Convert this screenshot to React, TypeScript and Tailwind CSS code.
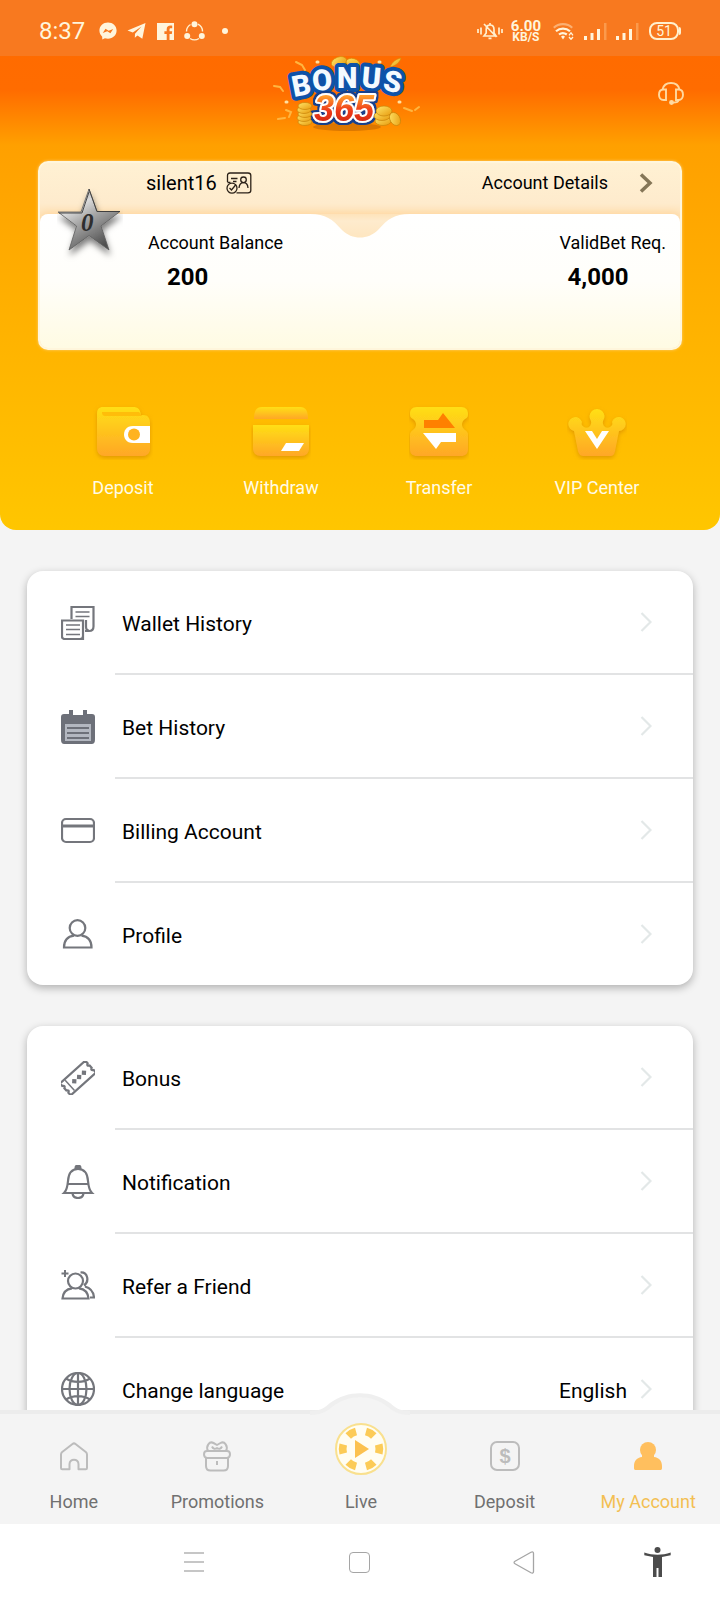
import type { ReactNode } from "react";

interface Item {
  label: string;
  icon: ReactNode;
  value?: string;
}

/* Status bar icons */

const MessengerIcon = () => (
  <svg className="w-[18px] h-[18px]" viewBox="0 0 18 18" fill="#fff5dc">
    <path
      fillRule="evenodd"
      d="M9 .5C4.2.5.4 3.9.4 8.6c0 2.5 1.1 4.6 2.8 6.1l.1 2.8 2.6-1.2c1 .3 2 .5 3.100.5 4.800 0 8.600-3.500 8.600-8.200S13.800.5 9 .5ZM3.800 10.900l2.700-4.100 3.200 1.900 4.500-1.800-2.800 4.300-3.100-2-4.500 1.700Z"
    />
  </svg>
);

const TelegramIcon = () => (
  <svg className="w-[19px] h-[18px]" viewBox="0 0 19 18" fill="#fff5dc">
    <path d="M18.500 1 .5 8.500l5.300 2 8.700-6-6.500 7.300-.2 4 2.700-2.400 4.800 3.400Z" />
  </svg>
);

const FacebookIcon = () => (
  <svg className="w-[17px] h-[17px]" viewBox="0 0 17 17" fill="#fff5dc">
    <path d="M0 0h17v17h-4.500v-6h2.300l.4-2.800h-2.700V6.500c0-.8.400-1.300 1.400-1.300h1.300V2.700c-3.600-.5-5.500.7-5.500 3.500v2H7.400V11h2.300v6H0Z" />
  </svg>
);

const ShareIcon = () => (
  <svg className="w-[21px] h-[20px]" viewBox="0 0 21 20" fill="none" stroke="#fff0cf" strokeWidth="1.400">
    <path d="M6.500 3.500a8 8 0 0 0-4 7M14 3.200a8 8 0 0 1 4.500 7.300M6 17.500a8.500 8.500 0 0 0 9 0" />
    <g fill="#fff5dc" stroke="none">
      <circle cx="10.500" cy="3.200" r="3" />
      <circle cx="3.200" cy="15" r="3" />
      <circle cx="17.800" cy="15" r="3" />
    </g>
  </svg>
);

const MuteIcon = () => (
  <svg className="w-[26px] h-[18px]" viewBox="0 0 26 18" fill="none" stroke="#fff0cf" strokeWidth="1.700">
    <path d="M1 7v4M4 5.500v7M22 5.500v7M25 7v4" />
    <path d="M7 14 9.200 11V7.500C9.200 4.500 11 3 13 3s4 1.500 4 4.500V11l2 3ZM13 1v2M11.500 16.300h3M7 2l12.500 13" />
  </svg>
);

const WifiIcon = () => (
  <svg className="w-[21px] h-[17px]" viewBox="0 0 21 17" fill="none" strokeWidth="2.200">
    <path d="M.8 4.800c5-4.800 13.500-4.800 18.400 0" stroke="#fbb072" />
    <path d="M3 8.300c4-3.700 10-3.700 14 0M6 11.500c2.500-2 5-2 7.800 0" stroke="#fff5dc" />
    <path d="m8 13.500 2-1 2 1-2 3Z" fill="#fff5dc" stroke="none" />
    <path d="m16 12.300 2-2.500 2 2.500M16 14l2 2.300L20 14" stroke="#fff5dc" strokeWidth="1.300" />
  </svg>
);

const SignalIcon = () => (
  <svg className="w-[23px] h-[17px]" viewBox="0 0 23 17" fill="#fff5dc">
    <path d="M0 13h3v4H0ZM6.500 10h3v7h-3ZM13 6h3v11h-3Z" />
    <path d="M20 0h2.500v17H20Z" fill="#fb9a4c" />
  </svg>
);

const HeadsetIcon = () => (
  <svg className="w-[26px] h-[23px]" viewBox="0 0 26 23" fill="none" stroke="#ffd9a0" strokeWidth="1.900">
    <path d="M4.500 7.500C5.500 3 9 1 13 1s7.500 2 8.500 6.500" />
    <path d="M8 7.500H5.500C2.500 7.500 1 10 1 12.800 1 15.500 2.500 18 5.500 18H8ZM18 7.500h2.500c3 0 4.500 2.500 4.500 5.300 0 2.700-1.500 5.200-4.500 5.200H18Z" />
    <path d="M20.500 18c0 1.800-2 2.600-5.500 2.600" />
    <circle cx="13.500" cy="20.500" r="1.500" fill="#ffd9a0" />
  </svg>
);

const Logo = () => (
  <svg className="w-[180px] h-[84px]" viewBox="10 6 180 84" role="img" aria-label="Bonus 365">
    <defs>
      <linearGradient id="logo-num" x1="0" y1="0" x2="0" y2="1">
        <stop offset="0.200" stopColor="#ff9c2e" />
        <stop offset="0.550" stopColor="#ee3a1a" />
        <stop offset="1" stopColor="#c3200f" />
      </linearGradient>
      <linearGradient id="logo-coin" x1="0" y1="0" x2="1" y2="1">
        <stop offset="0" stopColor="#ffe66a" />
        <stop offset="1" stopColor="#e89a0c" />
      </linearGradient>
      <filter id="logo-outline" x="-15%" y="-15%" width="130%" height="130%">
        <feMorphology in="SourceAlpha" operator="dilate" radius="2" result="grown" />
        <feFlood floodColor="#123f8e" />
        <feComposite in2="grown" operator="in" />
        <feMerge>
          <feMergeNode />
          <feMergeNode in="SourceGraphic" />
        </feMerge>
      </filter>
    </defs>
    <g fill="url(#logo-coin)" stroke="#d98a0a" strokeWidth="0.700">
      <ellipse cx="79" cy="12" rx="8" ry="5" transform="rotate(-20 79 12)" />
      <ellipse cx="93" cy="13" rx="7" ry="4.500" transform="rotate(15 93 13)" />
      <path d="M130 17c2-5 6-8 11-9-1 4-5 8-11 9Z" />
    </g>
    <g fill="none" stroke="#ffb640" strokeWidth="2" strokeLinecap="round">
      <path d="m36 12 6 3 3 5M14 36l6 1 3 4M18 69l7-1M26 60l5 2-2 5M144 58l8 3M155 60l4-3" />
      <path d="M57 12h1M119 12h1M26 52h1M139 52h1" strokeWidth="3" stroke="#ffe0a0" />
    </g>
    <ellipse cx="87" cy="77" rx="34" ry="4" fill="#9a4a00" opacity="0.350" />
    <text
      x="34 53 77 101 122"
      y="47 41 38 37 40"
      rotate="-11 -5 0 5 10"
      fontFamily="Roboto, sans-serif"
      fontWeight="900"
      fontSize="29"
      strokeLinejoin="round"
      paintOrder="stroke"
      fill="#f4faff"
      stroke="#0e52a8"
      strokeWidth="8"
    >
      BONUS
    </text>
    <text
      x="54"
      y="71"
      fontFamily="'Liberation Sans', sans-serif"
      fontWeight="700"
      fontStyle="italic"
      fontSize="36"
      strokeLinejoin="round"
      paintOrder="stroke"
      fill="url(#logo-num)"
      stroke="#fff"
      strokeWidth="4"
      filter="url(#logo-outline)"
    >
      365
    </text>
    <g fill="url(#logo-coin)" stroke="#c98409" strokeWidth="0.700">
      <ellipse cx="45" cy="72" rx="7" ry="3.500" />
      <ellipse cx="44" cy="68" rx="7" ry="3.500" />
      <ellipse cx="45" cy="64" rx="7" ry="3.500" />
      <ellipse cx="44" cy="60" rx="7" ry="3.500" />
      <ellipse cx="45" cy="56" rx="7" ry="3.500" />
      <ellipse cx="123" cy="71" rx="8" ry="4.500" />
      <ellipse cx="122" cy="66" rx="8" ry="4.500" />
      <ellipse cx="124" cy="61" rx="8" ry="5" />
      <ellipse cx="135" cy="69" rx="5" ry="7" transform="rotate(-30 135 69)" />
    </g>
  </svg>
);

/* Account card */

const IdCardIcon = () => (
  <svg className="w-[26px] h-[22px]" viewBox="0 0 26 22" fill="none" stroke="#2b2118" strokeWidth="1.300">
    <path d="M1.500 10V3.500C1.500 2 2.300 1 4 1h18c1.800 0 2.800 1 2.800 2.500v15c0 1.500-1 2.300-2.800 2.300H10.500" />
    <path d="M5 6.500h6.500M7 9.500h3.500M1.500 10.500h3" />
    <circle cx="17.500" cy="7.800" r="2.800" />
    <path d="M13 16c.3-3.500 2-5.300 4.500-5.300s4.300 1.800 4.500 5.300" />
    <circle cx="6" cy="16.200" r="5" />
    <path d="m3.500 16 2 2 4.500-5.500" />
  </svg>
);

const StarBadge = () => (
  <svg className="absolute left-[17px] top-[25px] w-[66px] h-[76px]" viewBox="0 0 66 76">
    <defs>
      <linearGradient id="star" x1="0" y1="0" x2="0.600" y2="1">
        <stop offset="0" stopColor="#6e6e6e" />
        <stop offset="0.350" stopColor="#dadada" />
        <stop offset="0.550" stopColor="#a9a9a9" />
        <stop offset="1" stopColor="#4f4f4f" />
      </linearGradient>
      <filter id="star-shadow" x="-20%" y="-20%" width="150%" height="150%">
        <feDropShadow dx="1" dy="5" stdDeviation="3" floodColor="#000" floodOpacity="0.500" />
      </filter>
    </defs>
    <path
      d="m32 1 8 22.500h23L44 38l8 24L32 47.500 12 62l7.500-24L1 24h23Z"
      fill="url(#star)"
      stroke="#5d5d5d"
      strokeWidth="0.800"
      filter="url(#star-shadow)"
    />
    <path d="m32 4-7 21H2M32 1l8 22.500h23" fill="none" stroke="#3a3a3a" strokeWidth="0.900" />
    <text
      x="24"
      y="43"
      fontFamily="'Liberation Serif', serif"
      fontStyle="italic"
      fontWeight="700"
      fontSize="25"
      fill="#2e2e2e"
    >
      0
    </text>
  </svg>
);

/* Quick actions */

const ActionDefs = () => (
  <svg className="absolute w-0 h-0" aria-hidden="true">
    <defs>
      <linearGradient id="gold" x1="0" y1="0" x2="0" y2="1">
        <stop offset="0" stopColor="#ffdf16" />
        <stop offset="1" stopColor="#ffa726" />
      </linearGradient>
      <filter id="gold-shadow" x="-20%" y="-20%" width="140%" height="150%">
        <feDropShadow dx="0" dy="2" stdDeviation="2" floodColor="#c47400" floodOpacity="0.500" />
      </filter>
    </defs>
  </svg>
);

const actions: Item[] = [
  {
    label: "Deposit",
    icon: (
      <>
        <path
          d="M9 1h30c5 0 7 2 8 8h2c5 0 7 3 7 8v26c0 4-3 7-7 7H11c-5 0-8-3-8-8V8c0-5 2-7 6-7Z"
          fill="url(#gold)"
          filter="url(#gold-shadow)"
        />
        <path d="M8 6h37l3 4H12c-3 0-4-1-4-4Z" fill="#ffbd0a" />
        <path d="M39 20h17v17H39c-7 0-9-5-9-8.500S32 20 39 20Z" fill="#fff" />
        <circle cx="40" cy="28.500" r="6" fill="#ffb320" />
      </>
    ),
  },
  {
    label: "Withdraw",
    icon: (
      <>
        <path d="M10 1h38c6 0 8 4 8 12H2C2 5 4 1 10 1Z" fill="url(#gold)" />
        <path
          d="M1 19h56v23c0 5-3 8-8 8H9c-5 0-8-3-8-8Z"
          fill="url(#gold)"
          filter="url(#gold-shadow)"
        />
        <path d="M34 37h18l-5 8H29Z" fill="#fff" />
      </>
    ),
  },
  {
    label: "Transfer",
    icon: (
      <>
        <path
          d="M7 1h44c5 0 7 3 7 7 0 3-1 4-3 5-4 3-4 8 0 11 2 1 3 3 3 5v14c0 5-3 7-7 7H7c-4 0-7-2-7-7V29c0-2 1-4 3-5 4-3 4-8 0-11-2-1-3-2-3-5 0-4 2-7 7-7Z"
          fill="url(#gold)"
          filter="url(#gold-shadow)"
        />
        <path d="M14 14h14l5-7 12 15H14Z" fill="#ff8000" />
        <path d="M13 27h33v9H31l-5 7L13 27Z" fill="#fff" />
      </>
    ),
  },
  {
    label: "VIP Center",
    icon: (
      <>
        <path
          d="M23 15a7.500 7.500 0 1 1 12 0c-1 5 3 8 7 6 2-1 3-3 2-5a7 7 0 1 1 7 9l-4 20c-1 4-2 5-5 5H16c-3 0-5-1-6-5L6 25a7 7 0 1 1 8-9c-1 2 0 4 2 5 4 2 8-1 7-6Z"
          fill="url(#gold)"
          filter="url(#gold-shadow)"
        />
        <path d="M17 25h7l5 8 5-8h7L29 43Z" fill="#fff" />
      </>
    ),
  },
];

/* Menu rows */

const historyMenu: Item[] = [
  {
    label: "Wallet History",
    icon: (
      <>
        <path d="M10.500 13V1h22v19.500c0 3-2 4.500-4.500 4.500h-4M28 24.500c-2 0-3-1.500-3-4V14" />
        <path d="M14.500 6h14M14.500 10.500h14" strokeWidth="1.500" />
        <path d="M1 14.500h21v18.500H3.500C2 33 1 32 1 30.500ZM22 30c0 2-1 3-3 3" />
        <path d="M5 19h14M5 23.500h14M5 28.500h14" strokeWidth="1.500" />
      </>
    ),
  },
  {
    label: "Bet History",
    icon: (
      <>
        <path
          d="M3 4h5V0h4v5h10V0h4v4h5c2 0 3 1 3 3v22c0 4-1 5-4 5H4c-3 0-4-1-4-5V7c0-2 1-3 3-3Z"
          fill="#6d7079"
          stroke="none"
        />
        <path d="M4 14h26v17H4Z" fill="#b3b7c0" stroke="none" />
        <path d="M6 18h22M6 23h22M6 28h22" stroke="#6d7079" strokeWidth="1.800" />
      </>
    ),
  },
  {
    label: "Billing Account",
    icon: (
      <>
        <rect x="1" y="5" width="32" height="23" rx="4" />
        <path d="M1 12h32" strokeWidth="3" />
      </>
    ),
  },
  {
    label: "Profile",
    icon: (
      <>
        <circle cx="16.500" cy="11" r="7.800" />
        <path d="M13 18.700C7 19.500 3 23.500 3 30.500h27.500c0-7-4-11-10-11.800" />
      </>
    ),
  },
];

const settingsMenu: Item[] = [
  {
    label: "Bonus",
    icon: (
      <g transform="rotate(-42 17 17)">
        <path d="M0 9h34v3.500c-2 1-2 2 0 3v3c-2 1-2 2 0 3V25H0v-3.500c2-1 2-2 0-3v-3c2-1 2-2 0-3Z" />
        <path d="M6 10v14" strokeWidth="1.500" />
        <path d="m12 14 3 3-3 3-3-3ZM18.500 14l3 3-3 3-3-3ZM25 14l3 3-3 3-3-3Z" fill="#74767c" stroke="none" />
      </g>
    ),
  },
  {
    label: "Notification",
    icon: (
      <>
        <path d="M3 28h28c-3-3-3.500-6-4-12C26.500 8 23 4 17 4S7.500 8 7 16c-.5 6-1 9-4 12ZM7 19h20" />
        <path d="M14.500 3.500C14.500 1 15.500.5 17 .5s2.500.5 2.500 3Z" fill="#74767c" />
        <path d="M11.500 28.500c1 6 10 6 11 0" />
      </>
    ),
  },
  {
    label: "Refer a Friend",
    icon: (
      <>
        <path d="M4 1v7M.5 4.500h7" strokeWidth="2" />
        <circle cx="14.500" cy="12" r="7.500" />
        <path d="M11 19.300C5 20 2 23.500 1.500 29.500h26C27 23.500 24 20 18 19.300" />
        <path d="M19.500 3.500c7.500-.5 9 9 3.500 13M24 17.500c5.500 1.500 8.500 5 9 11h-4" />
      </>
    ),
  },
  {
    label: "Change language",
    value: "English",
    icon: (
      <>
        <circle cx="17" cy="17" r="16" />
        <ellipse cx="17" cy="17" rx="8.500" ry="16" />
        <path d="M17 1v32M1 17h32M5 6.500c7 4.500 17 4.500 24 0M5 27.500c7-4.500 17-4.500 24 0" />
      </>
    ),
  },
];

const MenuCard = ({ items }: { items: Item[] }) => (
  <ul className="mx-[27px] rounded-2xl bg-white shadow-[0_3px_9px_rgba(0,0,0,0.28)]">
    {items.map((item, index) => (
      <li key={item.label} className="h-[104px] last:h-[102px]">
        <button className="w-full h-full flex items-center text-left">
          <span className="w-[88px] pl-[34px] shrink-0">
            <svg
              className="w-[34px] h-[34px]"
              viewBox="0 0 34 34"
              fill="none"
              stroke="#74767c"
              strokeWidth="2.200"
            >
              {item.icon}
            </svg>
          </span>
          <span
            className={`flex-1 h-full flex items-center pl-[7px] pr-[41px] ${
              index < items.length - 1 ? "border-b-2 border-[#e2e3e4]" : ""
            }`}
          >
            <span className="flex-1 text-[21px] pt-1.5">{item.label}</span>
            {item.value && <span className="text-[21px] pt-1.5 pr-[13px]">{item.value}</span>}
            <svg
              className="w-[12px] h-[20px]"
              viewBox="0 0 12 20"
              fill="none"
              stroke="#e3e8e8"
              strokeWidth="2.200"
            >
              <path d="m1.500 1 9 9-9 9" />
            </svg>
          </span>
        </button>
      </li>
    ))}
  </ul>
);

/* Bottom tabs */

const WEDGES = [30, 90, 150, 210, 270, 330];

const LiveIcon = () => (
  <svg className="w-[54px] h-[54px]" viewBox="0 0 54 54">
    <circle cx="27" cy="27" r="25" fill="#fffdf2" stroke="#f9e08e" strokeWidth="2" />
    {WEDGES.map((angle) => (
      <path
        key={angle}
        d="M21.500 5.500q5.500-1.500 11 0l-2 7.500q-3.500-1-7 0Z"
        fill="#fccb57"
        transform={`rotate(${angle} 27 27)`}
      />
    ))}
    <path d="m21 18 14 9-14 9Z" fill="#fcc14f" />
  </svg>
);

const TabIcon = ({ children }: { children: ReactNode }) => (
  <svg
    className="w-[32px] h-[32px]"
    viewBox="0 0 32 32"
    fill="none"
    stroke="#bcbcbc"
    strokeWidth="2"
    strokeLinejoin="round"
  >
    {children}
  </svg>
);

const tabs: Item[] = [
  {
    label: "Home",
    icon: (
      <TabIcon>
        <path d="M3 28V14.500c0-1 .4-1.800 1.200-2.500L14.500 4c1-.8 2-.8 3 0l10.300 8c.8.7 1.200 1.500 1.200 2.500V28c0 .8-.5 1.200-1.200 1.200h-7.300v-5c0-6-9-6-9 0v5H4.200C3.500 29.200 3 28.800 3 28Z" />
      </TabIcon>
    ),
  },
  {
    label: "Promotions",
    icon: (
      <TabIcon>
        <path d="M6 11h20c4 0 4 6.500 0 7H6c-4-.5-4-7 0-7ZM5 18v8c0 3 1.500 4.500 4.500 4.500h13c3 0 4.500-1.500 4.500-4.500v-8M16 21v4" />
        <path d="M7 11C4.500 6 8.500.8 12.500 3L16 5l3.500-2C23.500.8 27.500 6 25 11M11 6.500c1 2 2.500 3 5 1.500 2.500 1.500 4 .5 5-1.500" />
      </TabIcon>
    ),
  },
  { label: "Live", icon: <LiveIcon /> },
  {
    label: "Deposit",
    icon: (
      <TabIcon>
        <rect x="2" y="2" width="28" height="28" rx="6" />
        <text
          x="16"
          y="23"
          textAnchor="middle"
          fontFamily="'Liberation Sans', sans-serif"
          fontWeight="700"
          fontSize="20"
          fill="#bcbcbc"
          stroke="none"
        >
          $
        </text>
      </TabIcon>
    ),
  },
  {
    label: "My Account",
    icon: (
      <TabIcon>
        <g fill="#ffbf5e" stroke="none">
          <circle cx="16" cy="10" r="8" />
          <path d="M10 15h12v2c5 .5 8 4 8 9v2c0 1.500-.5 2-2 2H4c-1.500 0-2-.5-2-2v-2c0-5 3-8.500 8-9Z" />
        </g>
      </TabIcon>
    ),
  },
];

const App = () => {
  return (
    <div className="h-screen flex flex-col bg-[#f4f4f4] text-black font-['Roboto',sans-serif]">
      <main className="flex-1 min-h-0 overflow-y-auto [scrollbar-width:none]">
        <header className="h-[530px] rounded-b-2xl overflow-hidden bg-[linear-gradient(to_bottom,#ff6a00_0px,#ff6c00_90px,#ffa000_145px,#ffc600_530px)]">
          {/* Status bar */}
          <div className="h-14 pl-[39px] pr-[39px] pt-[6px] flex items-center justify-between bg-[#f8791f] text-[#fff5dc]">
            <div className="flex items-center">
              <span className="text-2xl font-normal mr-[14px]">8:37</span>
              <MessengerIcon />
              <span className="w-[10px]" />
              <TelegramIcon />
              <span className="w-[11px]" />
              <FacebookIcon />
              <span className="w-[10px]" />
              <ShareIcon />
              <span className="ml-[17px] w-[6px] h-[6px] rounded-full bg-[#fff5dc]" />
            </div>
            <div className="flex items-center">
              <MuteIcon />
              <div className="mx-2 pr-1 flex flex-col items-center font-bold">
                <span className="text-[15px] leading-[12px]">6.00</span>
                <span className="text-[12px] leading-[10px]">KB/S</span>
              </div>
              <WifiIcon />
              <span className="w-[10px]" />
              <SignalIcon />
              <span className="w-[9px]" />
              <SignalIcon />
              <span className="ml-[10px] flex items-center">
                <span className="w-[30px] h-[18px] rounded-lg border-2 border-[#fff0cf] text-[14px] leading-[14px] text-center">
                  51
                </span>
                <span className="w-[2px] h-[8px] rounded-r bg-[#fff0cf]" />
              </span>
            </div>
          </div>

          {/* Logo and support */}
          <div className="h-[84px] px-9 grid grid-cols-[1fr_auto_1fr]">
            <span />
            <Logo />
            <button aria-label="Support" className="justify-self-end self-start pt-[26px]">
              <HeadsetIcon />
            </button>
          </div>

          {/* Account card */}
          <section className="relative mt-[21px] mx-[38px] h-[189px] flex flex-col rounded-[10px] overflow-hidden border-2 border-[#fff6dc] bg-[linear-gradient(to_bottom,#fff1d3_0px,#feebcd_40px,#fee2b8_54px)] shadow-[0_0_3px_#ffd27a]">
            <div className="h-[51px] pb-3 pl-[106px] pr-[27px] flex items-center justify-between">
              <div className="flex items-center gap-[9px]">
                <span className="text-xl">silent16</span>
                <IdCardIcon />
              </div>
              <button className="flex items-center gap-[31px] text-lg">
                Account Details
                <svg className="w-[14px] h-[20px]" viewBox="0 0 14 20" fill="none" stroke="#857657" strokeWidth="3.500">
                  <path d="m2 1.500 9 8.500-9 8.500" />
                </svg>
              </button>
            </div>
            <div className="relative flex-1 pt-[15px] pl-[108px] pr-[14px] flex justify-between rounded-t-lg bg-[linear-gradient(to_bottom,#ffffff_0%,#fffefa_50%,#fffbe3_100%)] shadow-[0_-2px_6px_#ffd9a4]">
              <svg
                className="absolute top-0 left-1/2 -translate-x-1/2 w-[100px] h-[26px]"
                viewBox="0 0 100 26"
              >
                <defs>
                  <linearGradient id="notch" x1="0" y1="0" x2="0" y2="1">
                    <stop offset="0" stopColor="#fee3ba" />
                    <stop offset="0.300" stopColor="#feebcd" />
                    <stop offset="1" stopColor="#fee6c0" />
                  </linearGradient>
                </defs>
                <path d="M0 0h100C84 0 78 5 68 16 58 26 42 26 32 16 22 5 16 0 0 0Z" fill="url(#notch)" />
              </svg>
              <div>
                <p className="text-lg">Account Balance</p>
                <p className="pl-[19px] text-2xl leading-10 font-bold">200</p>
              </div>
              <div>
                <p className="text-lg">ValidBet Req.</p>
                <p className="pl-[8px] text-2xl leading-10 font-bold">4,000</p>
              </div>
            </div>
            <StarBadge />
          </section>

          {/* Quick actions */}
          <ActionDefs />
          <div className="mt-[54px] px-11 grid grid-cols-4">
            {actions.map((action) => (
              <button key={action.label} className="flex flex-col items-center gap-[14px]">
                <svg className="w-[60px] h-[56px]" viewBox="-1 -2 60 56">
                  {action.icon}
                </svg>
                <span className="text-lg text-[#fffbe6]">{action.label}</span>
              </button>
            ))}
          </div>
        </header>

        <div className="pt-[41px] flex flex-col gap-[41px]">
          <MenuCard items={historyMenu} />
          <MenuCard items={settingsMenu} />
        </div>
      </main>

      {/* Tabs */}
      <nav className="relative shrink-0 h-[114px] pl-[2px] grid grid-cols-5 border-t-4 border-[#ececec] bg-[#f4f4f4]">
        <svg className="absolute left-1/2 -translate-x-1/2 top-[-21px] w-[100px] h-[24px]" viewBox="0 0 100 24">
          <path d="M0 24v-6C12 18 15 14 20 10 38-3 62-3 80 10c5 4 8 8 20 8v6Z" fill="#efefef" />
          <path d="M0 24v-2C12 22 17 18 22 14 38 1 62 1 78 14c5 4 10 8 22 8v2Z" fill="#f4f4f4" />
        </svg>
        {tabs.map((tab) => (
          <a key={tab.label} href="#" className="relative flex flex-col items-center justify-end pb-2">
            <span className={`flex items-center ${tab.label === "Live" ? "mb-3" : "mb-4"}`}>{tab.icon}</span>
            <span
              className={`text-lg whitespace-nowrap ${
                tab.label === "My Account" ? "text-[#f3bf52]" : "text-[#707070]"
              }`}
            >
              {tab.label}
            </span>
          </a>
        ))}
      </nav>

      {/* System keys */}
      <div className="shrink-0 h-[76px] pl-28 pr-3 grid grid-cols-[165fr_165fr_165fr_102fr] place-items-center bg-white">
        <button aria-label="Recent apps">
          <svg className="w-[20px] h-[20px]" viewBox="0 0 20 20" stroke="#b4b4b4" strokeWidth="1.500">
            <path d="M0 1h20M0 10h20M0 19h20" />
          </svg>
        </button>
        <button aria-label="Home screen" className="w-[21px] h-[21px] rounded border border-[#a5a5a5]" />
        <button aria-label="Back">
          <svg className="w-[22px] h-[23px]" viewBox="0 0 22 23" fill="none" stroke="#a5a5a5" strokeWidth="1.300">
            <path d="M2 10.200 18 1.200c1.500-.8 2.500-.2 2.500 1.300v18c0 1.500-1 2.100-2.500 1.300L2 12.800c-1.200-.7-1.200-1.900 0-2.600Z" />
          </svg>
        </button>
        <button aria-label="Accessibility">
          <svg className="w-[27px] h-[30px]" viewBox="0 0 27 30" fill="#4b4b4b">
            <circle cx="13.500" cy="3" r="3" />
            <path d="M.3 5.500C9 8.500 18 8.500 26.700 5.500v2.800L18 10v20h-3.500v-9h-2v9H9V10L.3 8.300Z" />
          </svg>
        </button>
      </div>
    </div>
  );
};

export default App;
